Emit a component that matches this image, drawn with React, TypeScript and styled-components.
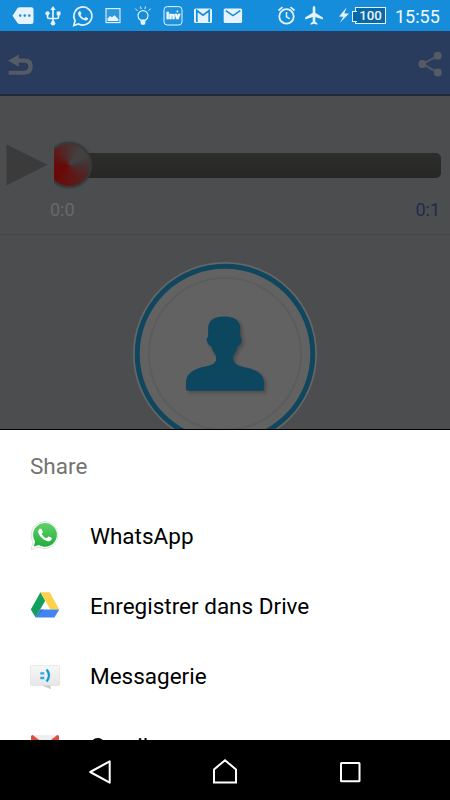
import React from 'react';
import styled, { createGlobalStyle } from 'styled-components';

const GlobalStyle = createGlobalStyle`
  * { box-sizing: border-box; }
  body { margin: 0; background: #000; }
`;

const Screen = styled.div`
  width: 450px;
  height: 800px;
  display: flex;
  flex-direction: column;
  overflow: hidden;
  background: #4c4d4f;
  font-family: Roboto, 'Liberation Sans', sans-serif;
`;

const StatusBar = styled.header`
  flex: none;
  height: 31px;
  display: flex;
  align-items: center;
  padding: 0 10px 0 7.5px;
  background: #158ddb;
`;

const StatusIcon = styled.svg<{ $overlap?: number }>`
  flex: none;
  width: 30px;
  height: 31px;
  margin-right: ${(p) => -(p.$overlap ?? 0)}px;
`;

const StatusRight = styled.div`
  margin-left: auto;
  display: flex;
  align-items: center;
  height: 31px;
`;

const Clock = styled.span`
  width: 45px;
  margin-left: 9px;
  color: #f2f9fe;
  font-size: 18px;
  font-weight: 400;
  line-height: 31px;
  padding-top: 2px;
  white-space: nowrap;
`;

const Battery = styled.div`
  position: relative;
  width: 31px;
  height: 17px;
  margin-left: 1px;
  border: 1px solid #e4f2fb;
  background: #0b68a8;
  color: #e9f4fc;
  font-size: 13.3px;
  font-weight: 500;
  line-height: 15px;
  text-align: center;

  &::before {
    content: '';
    position: absolute;
    left: -4px;
    top: 3px;
    width: 4px;
    height: 9px;
    border: 1px solid #e4f2fb;
    border-right: 0;
    background: #0b68a8;
  }
`;

const Toolbar = styled.div`
  flex: none;
  height: 65px;
  display: flex;
  align-items: center;
  justify-content: space-between;
  padding: 0 7px 0 7px;
  background: #293c5e;
  border-bottom: 2px solid #20283b;
`;

const ToolIcon = styled.svg`
  width: 28px;
  height: 28px;
`;

const Player = styled.section`
  flex: none;
  height: 139px;
  padding: 44px 9px 0 6px;
  border-bottom: 1px solid #434745;
`;

const TrackRow = styled.div`
  display: flex;
  align-items: center;
  height: 50px;
`;

const PlayShape = styled.svg`
  flex: none;
  width: 42px;
  height: 42px;
`;

const Seek = styled.div`
  flex: 1;
  margin-left: 6px;
  height: 50px;
  display: flex;
  align-items: center;
  overflow: hidden;
`;

const Track = styled.div`
  flex: 1;
  height: 25px;
  margin-left: -30px;
  border-radius: 5px;
  background: linear-gradient(#2d2e2b, #272825);
`;

const Knob = styled.div`
  position: relative;
  z-index: 1;
  flex: none;
  width: 46px;
  height: 46px;
  margin-left: -8px;
  border: 2px solid #38393a;
  border-radius: 50%;
  background: conic-gradient(from 0deg, #4b3130 0deg, #454041 40deg, #414142 60deg, #443233 90deg, #552120 130deg, #621412 180deg, #6b0806 235deg, #640c0a 275deg, #5a1d1b 320deg, #4b3130 360deg);
  box-shadow: 0 0 2px #303132;
`;

const Times = styled.div`
  display: flex;
  justify-content: space-between;
  margin-top: 8px;
  padding: 0 1px 0 44px;
  font-size: 18px;
  line-height: 24px;
`;

const Time = styled.span<{ $color: string }>`
  color: ${(p) => p.$color};
`;

const AvatarArea = styled.section`
  flex: none;
  height: 195px;
  overflow: hidden;
  display: flex;
  justify-content: center;
  border-bottom: 1px solid #000;
`;

const Avatar = styled.svg`
  flex: none;
  width: 186px;
  height: 186px;
  margin-top: 26px;
`;

const Sheet = styled.section`
  flex: none;
  height: 310px;
  overflow: hidden;
  background: #fff;
`;

const SheetTitle = styled.h1`
  margin: 0;
  height: 70px;
  padding: 1px 30px 0;
  color: #737373;
  font-size: 22.5px;
  font-weight: 400;
  line-height: 70px;
`;

const ShareRow = styled.div`
  height: 70px;
  display: flex;
  align-items: center;
  padding: 0 30px;
  gap: 30px;
  color: #000;
  font-size: 22.5px;
`;

const ShareLabel = styled.span`
  padding-top: 2px;
  line-height: 68px;
`;

const AppIcon = styled.svg`
  flex: none;
  width: 30px;
  height: 30px;
  overflow: visible;
`;

const NavBar = styled.nav`
  flex: none;
  height: 60px;
  display: flex;
  justify-content: center;
  gap: 95px;
  padding-top: 17px;
  background: #000;
`;

const NavIcon = styled.svg`
  width: 30px;
  height: 30px;
  fill: none;
  stroke: #fff;
  stroke-width: 2;
`;

const W = '#e6f3fc';
const HANDSET =
  'M17.472 14.382c-.297-.149-1.758-.867-2.03-.967-.273-.099-.471-.148-.67.15-.197.297-.767.966-.94 1.164-.173.199-.347.223-.644.075-.297-.15-1.255-.463-2.39-1.475-.883-.788-1.48-1.761-1.653-2.059-.173-.297-.018-.458.13-.606.134-.133.298-.347.446-.52.149-.174.198-.298.298-.497.099-.198.05-.371-.025-.52-.075-.149-.669-1.612-.916-2.207-.242-.579-.487-.5-.669-.51-.173-.008-.371-.01-.57-.01-.198 0-.52.074-.792.372-.272.297-1.04 1.016-1.04 2.479 0 1.462 1.065 2.875 1.213 3.074.149.198 2.096 3.2 5.077 4.487.709.306 1.262.489 1.694.625.712.227 1.36.195 1.871.118.571-.085 1.758-.719 2.006-1.413.248-.694.248-1.289.173-1.413-.074-.124-.272-.198-.57-.347';

function NotificationIcons() {
  return (
    <>
      <StatusIcon viewBox="0 0 30 31">
        <path d="M4.5 15.7 9.5 8.3Q10.3 7.2 11.6 7.2H23.3Q25.5 7.2 25.5 9.3V21.7Q25.5 24 23.3 24H11.6Q10.3 24 9.5 23Z" fill={W} />
        <g fill="#2592da"><circle cx="12.2" cy="15.6" r="1.3" /><circle cx="16.8" cy="15.6" r="1.3" /><circle cx="21.3" cy="15.6" r="1.3" /></g>
      </StatusIcon>
      <StatusIcon viewBox="0 0 30 31">
        <path d="M15 9V24M9.5 13V17Q9.5 18.5 11.2 18.5H18.8Q20.5 18.5 20.5 17V13" fill="none" stroke={W} strokeWidth="1.7" />
        <path d="m15 6 2.7 4h-5.4ZM18.7 11.5h3.8v3.8h-3.8Z" fill={W} />
        <circle cx="9.5" cy="13.3" r="2.1" fill={W} /><circle cx="15" cy="23.2" r="2.3" fill={W} />
      </StatusIcon>
      <StatusIcon viewBox="0 0 30 31">
        <path d="M5.8 25.4 7.1 20.5A9 9 0 1 1 10.6 23.9Z" fill="none" stroke={W} strokeWidth="1.7" />
        <g transform="translate(5.1 5.9) scale(.83)"><path d={HANDSET} fill={W} /></g>
      </StatusIcon>
      <StatusIcon viewBox="0 0 30 31">
        <rect x="8" y="8.6" width="14" height="14" fill="#2a98dd" stroke={W} strokeWidth="1.1" />
        <path d="M9.5 21v-2.5l2.5-2.5 2 1.3 2.5-2 3.9 4V21Z" fill={W} />
      </StatusIcon>
      <StatusIcon viewBox="0 0 30 31">
        <path d="M12.7 20.2Q10 18.6 10 15.7a5 5 0 0 1 10 0q0 2.9-2.7 4.5Z" fill="none" stroke={W} strokeWidth="1.2" />
        <path d="M12.6 20h4.8v3q0 2-2.4 2t-2.4-2Z" fill={W} />
        <path d="m13.2 9-.8-2.5M16.8 9l.8-2.5M9.5 10.8 7.3 8.6M20.5 10.8l2.2-2.2" stroke={W} strokeWidth="1" />
      </StatusIcon>
      <StatusIcon viewBox="0 0 30 31">
        <rect x="6" y="6.6" width="18" height="18.4" rx="3.2" fill="#1d92dc" stroke={W} strokeWidth="1" />
        <text x="15" y="19" fill="#fff" stroke="#fff" strokeWidth=".4" fontSize="9" fontWeight="900" textAnchor="middle" textLength="14" lengthAdjust="spacingAndGlyphs">Inv</text>
        <circle cx="19.4" cy="11.4" r=".9" fill="#fff" />
      </StatusIcon>
      <StatusIcon viewBox="0 0 30 31">
        <rect x="6" y="8.5" width="18" height="14.5" rx="1.5" fill={W} />
        <path d="M8.8 22V10.5L15 15.2l6.2-4.7V22" fill="none" stroke="#158ddb" strokeWidth="1.7" />
      </StatusIcon>
      <StatusIcon viewBox="0 0 30 31">
        <rect x="5.7" y="8.5" width="18.4" height="14.5" rx="1.5" fill={W} />
        <path d="m7.7 10.6 7.3 5.1 7.3-5.1" fill="none" stroke="#158ddb" strokeWidth="1.5" />
      </StatusIcon>
    </>
  );
}

function SystemIcons() {
  return (
    <StatusRight>
      <StatusIcon viewBox="0 0 30 31" $overlap={2.5}>
        <circle cx="14.5" cy="16.4" r="7.2" fill="none" stroke={W} strokeWidth="1.8" />
        <path d="M14.5 12v4.8l3.3 2.1" fill="none" stroke={W} strokeWidth="1.5" />
        <path d="m6.5 10.5 4-3.4M22.5 10.5l-4-3.4" stroke={W} strokeWidth="1.7" />
      </StatusIcon>
      <StatusIcon viewBox="0 0 30 31">
        <path d="M12.7 7.7q0-1.6 1.3-1.6t1.3 1.6v5l7.6 4.8v1.9l-7.6-2.4v4.8l2.1 1.5v1.5l-3.4-1-3.4 1v-1.5l2.1-1.5V17l-7.6 2.4v-1.9l7.6-4.8Z" fill={W} />
      </StatusIcon>
      <StatusIcon viewBox="0 0 30 31" $overlap={5.5}>
        <path d="m16.6 7.5-7.6 8.9 4.2.3-3.2 6.1 9-9.2-4.7-.1Z" fill={W} />
      </StatusIcon>
      <Battery>100</Battery>
      <Clock>15:55</Clock>
    </StatusRight>
  );
}

function WhatsAppIcon() {
  return (
    <AppIcon viewBox="0 0 30 30">
      <defs>
        <linearGradient id="waGreen" x1="0" y1="0" x2="0" y2="1"><stop stopColor="#62d16a" /><stop offset="1" stopColor="#22ad3d" /></linearGradient>
      </defs>
      <path d="M1.1 29.4 3 21.9A13.4 13.4 0 1 1 8.7 27.2Z" fill="#fbfbfb" stroke="#d9d9d9" strokeWidth=".8" />
      <circle cx="15" cy="14.8" r="11.9" fill="url(#waGreen)" />
      <path d="m3.8 26.4 1.7-6.2 4.5 4.6Z" fill="#27b043" />
      <g transform="translate(1.5 1.5) scale(1.12)"><path d={HANDSET} fill="#fff" /></g>
    </AppIcon>
  );
}

function DriveIcon() {
  return (
    <AppIcon viewBox="0 0 30 30">
      <path d="M10.5 2.3.8 19.4l4.8 8.2 9.6-16.8Z" fill="#13a05f" />
      <path d="M10.5 2.3h9.1l9.7 17.1h-9Z" fill="#ffd04b" />
      <path d="m10.3 19.4-4.7 8.2h18.8l4.9-8.2Z" fill="#4285f1" />
      <path d="m10.3 19.4-4.7 8.2 8.2-8.2Z" fill="#326dcc" opacity=".6" />
    </AppIcon>
  );
}

function MessageIcon() {
  return (
    <AppIcon viewBox="0 0 30 30">
      <defs>
        <linearGradient id="bubble" x1="0" y1="0" x2="0" y2="1"><stop stopColor="#f8f8f8" /><stop offset="1" stopColor="#e3e3e3" /></linearGradient>
      </defs>
      <path d="M1.7 5.5h26.7q1.2 0 1.2 1.2v17.4q0 1.3-1.2 1.3h-8v3.4L12.8 25.500H1.7Q.5 25.500 .5 24.200V6.700Q.5 5.500 1.700 5.500Z" fill="url(#bubble)" stroke="#d9d9d9" strokeWidth=".5" />
      <path d="m12.8 25.5 7.6 3.3V25.5Z" fill="#c9c9c9" />
      <path d="M10.3 13.3h4M10.3 18h4" stroke="#2fa7e5" strokeWidth="2.3" />
      <path d="M16.7 9.4q4.6 6-.1 12" fill="none" stroke="#179ad8" strokeWidth="2.4" />
    </AppIcon>
  );
}

function GmailIcon() {
  return (
    <AppIcon viewBox="0 0 30 30">
      <rect x="1" y="5" width="28" height="21" rx="2" fill="#efefef" />
      <path d="M1 26V6.5Q1 5 2.7 5L15 14.5 27.3 5Q29 5 29 6.5V26h-3.5V12L15 19.5 4.500 12v14Z" fill="#e04b3f" />
    </AppIcon>
  );
}

const targets = [
  { label: 'WhatsApp', Icon: WhatsAppIcon },
  { label: 'Enregistrer dans Drive', Icon: DriveIcon },
  { label: 'Messagerie', Icon: MessageIcon },
  { label: 'Gmail', Icon: GmailIcon },
];

export default function App() {
  return (
    <>
      <GlobalStyle />
      <Screen>
        <StatusBar><NotificationIcons /><SystemIcons /></StatusBar>
        <Toolbar>
          <ToolIcon viewBox="0 0 28 28">
            <path d="M.2 11.7 12.2 4.700V9.100H17.5Q26.200 9.100 26.200 17.500T17.500 26.200H1.200V21.300H17Q21 21.300 21 17.600T17 14.100H12.200V18.500Z" fill="#535b67" stroke="#273149" strokeWidth=".6" />
          </ToolIcon>
          <ToolIcon viewBox="0 0 28 28">
            <path d="M22.8 7 7.3 15l15.5 8.5" fill="none" stroke="#4e5664" strokeWidth="2" />
            <g fill="#545b64"><circle cx="7.3" cy="15" r="4" /><circle cx="22.8" cy="6.8" r="4" /><circle cx="22.8" cy="23.5" r="4" /></g>
          </ToolIcon>
        </Toolbar>
        <Player>
          <TrackRow>
            <PlayShape viewBox="0 0 42 42"><path d="M.5.5 41.5 20.8.5 41.5Z" fill="#3b3b3b" /></PlayShape>
            <Seek><Knob /><Track /></Seek>
          </TrackRow>
          <Times><Time $color="#686969">0:0</Time><Time $color="#1d2b4c">0:1</Time></Times>
        </Player>
        <AvatarArea>
          <Avatar viewBox="0 0 186 186">
            <defs>
              <filter id="soft" x="-20%" y="-20%" width="150%" height="150%"><feDropShadow dx="2" dy="2" stdDeviation="1.8" floodColor="#222" floodOpacity=".4" /></filter>
            </defs>
            <circle cx="93" cy="93" r="92" fill="#666" />
            <circle cx="93" cy="93" r="87.8" fill="#626262" stroke="#11465f" strokeWidth="5" />
            <circle cx="93" cy="93" r="76" fill="none" stroke="#5c5c5c" strokeWidth="2.2" />
            <path d="M92 55.5q15 0 16.2 10.5l.2 10.3q2.2 0 1.1 4.2-.7 4-3.4 4.4-1.3 5.3-4.8 10v4.3q2 5.3 10 6.7 20.7 3.5 20.7 15.6v6.7q0 1.5-1.4 1.5H55.5Q54 129.2 54 127.7V121q0-11.5 19-15.5 10.2-1.5 11-6.3v-4.3Q80.5 90.5 79 84.9 76.2 84.5 75 80.5q-1.1-4.2 1-4.2L76.2 66q1.2-10.5 15.8-10.5Z" fill="#11465f" filter="url(#soft)" />
          </Avatar>
        </AvatarArea>
        <Sheet>
          <SheetTitle>Share</SheetTitle>
          {targets.map(({ label, Icon }) => (
            <ShareRow key={label}><Icon /><ShareLabel>{label}</ShareLabel></ShareRow>
          ))}
        </Sheet>
        <NavBar>
          <NavIcon viewBox="0 0 30 30"><path d="M5.2 15 24.7 4.3V25.7Z" strokeLinejoin="round" /></NavIcon>
          <NavIcon viewBox="0 0 30 30"><path d="M4 25.5V12.5L15 3.2l11 9.3v13Z" /></NavIcon>
          <NavIcon viewBox="0 0 30 30"><rect x="6" y="6" width="18.5" height="18.2" rx=".5" /></NavIcon>
        </NavBar>
      </Screen>
    </>
  );
}
